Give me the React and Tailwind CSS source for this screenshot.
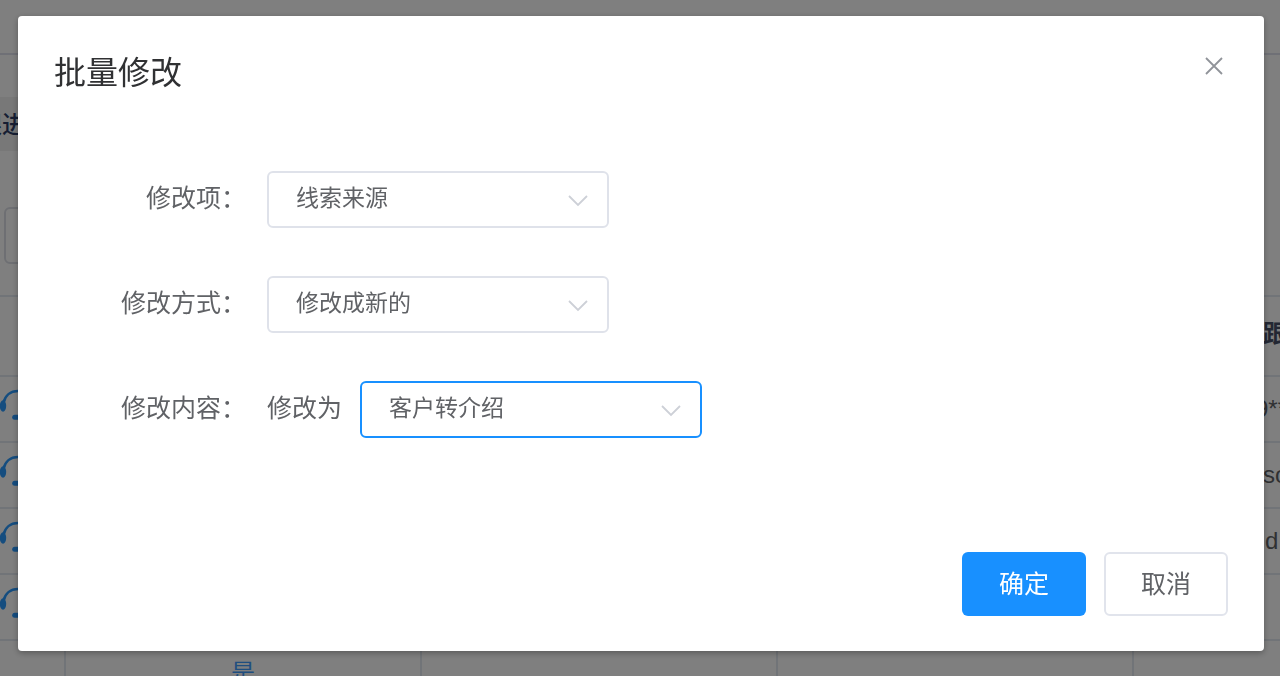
import { useState } from 'react';

const rows = [
  { id: 1, text: '9**', pad: 'pl-[122px]' },
  { id: 2, text: 'so', pad: 'pl-[130px]' },
  { id: 3, text: 'd', pad: 'pl-[132px]' },
  { id: 4, text: '', pad: 'pl-[130px]' },
];

function HeadsetIcon() {
  return (
    <svg width="36" height="46" viewBox="0 0 36 46" fill="none" className="block text-[#2a9aff]">
      <path d="M3.5 17C5 9.500 10.500 5 18 5s13 4.500 14.500 12" stroke="currentColor" strokeWidth="2.600" />
      <ellipse cx="3" cy="20" rx="3.200" ry="5.800" fill="currentColor" />
      <ellipse cx="33" cy="20" rx="3.200" ry="5.800" fill="currentColor" />
      <rect x="12.200" y="28.800" width="11.600" height="5" rx="2.500" fill="currentColor" />
    </svg>
  );
}

function LeadsPage() {
  return (
    <div className="h-screen overflow-hidden bg-white">
      <header className="h-[55px] border-b-2 border-[#dfe1ec]" />
      <div className="mt-[42px] flex h-[54px] w-60 items-center bg-[#f0f0f0] pt-0.5">
        <span className="flex w-[26px] justify-end overflow-hidden whitespace-nowrap text-2xl font-medium text-[#2c3c66]">
          跟进
        </span>
      </div>
      <input
        type="text"
        aria-label="搜索"
        className="mt-14 ml-1 block h-[57px] w-[340px] rounded-md border-2 border-[#dcdfe6]"
      />
      <table className="mt-[31px] w-full table-fixed border-collapse text-left text-2xl text-[#606266]">
        <colgroup>
          <col className="w-[65px]" />
          <col className="w-[356px]" />
          <col className="w-[356px]" />
          <col className="w-[356px]" />
          <col />
        </colgroup>
        <thead>
          <tr className="h-20 border-y-2 border-[#e3e9f0]">
            <th colSpan={4} />
            <th className="overflow-hidden pb-1 pl-[130px] font-bold whitespace-nowrap text-[#474f66]">跟</th>
          </tr>
        </thead>
        <tbody>
          {rows.map((row) => (
            <tr key={row.id} className="h-[66px] border-b-2 border-[#e3e9f0]">
              <td className="overflow-hidden p-0">
                <HeadsetIcon />
              </td>
              <td colSpan={3} />
              <td className={`overflow-hidden whitespace-nowrap ${row.pad}`}>{row.text}</td>
            </tr>
          ))}
          <tr className="h-[66px]">
            <td className="border-r-2 border-[#e3e9f0]" />
            <td className="border-r-2 border-[#e3e9f0] pb-0.5 text-center text-[#3f9cff]">是</td>
            <td className="border-r-2 border-[#e3e9f0]" />
            <td className="border-r-2 border-[#e3e9f0]" />
            <td />
          </tr>
        </tbody>
      </table>
    </div>
  );
}

function FormRow({ label, htmlFor, children }) {
  return (
    <div className="flex items-center">
      <label htmlFor={htmlFor} className="mr-[21px] w-48 shrink-0 pb-1 text-right text-[25px] leading-9">
        {label}
      </label>
      {children}
    </div>
  );
}

function Select({ id, value, onChange, options, active }) {
  return (
    <div className="relative w-[342px]">
      <select
        id={id}
        value={value}
        onChange={(e) => onChange(e.target.value)}
        className={`block h-[57px] w-full appearance-none rounded-md border-2 bg-white pr-14 pb-0.5 pl-[27px] text-[23px] text-[#606266] outline-none ${
          active ? 'border-[#1890ff]' : 'border-[#dfe2ea]'
        }`}
      >
        {options.map((option) => (
          <option key={option} value={option}>
            {option}
          </option>
        ))}
      </select>
      <svg
        width="20"
        height="12"
        viewBox="0 0 20 12"
        fill="none"
        className="pointer-events-none absolute top-6 right-[21px] text-[#cdd0d7]"
      >
        <path d="M1 1l9 9 9-9" stroke="currentColor" strokeWidth="1.800" />
      </svg>
    </div>
  );
}

export default function App() {
  const [field, setField] = useState('线索来源');
  const [mode, setMode] = useState('修改成新的');
  const [content, setContent] = useState('客户转介绍');

  return (
    <div className="font-['Liberation_Sans','Noto_Sans_CJK_SC',sans-serif]">
      <LeadsPage />

      <div className="fixed inset-0 overflow-auto bg-black/50 pt-4 pr-4 pl-[18px]">
        <div
          role="dialog"
          aria-labelledby="dialog-title"
          className="rounded bg-white px-9 pt-8 pb-[35px] text-[#606266] shadow-[0_2px_6px_rgba(0,0,0,0.3)]"
        >
          <div className="flex items-start justify-between">
            <h2 id="dialog-title" className="text-[32px] leading-[50px] text-[#303133]">
              批量修改
            </h2>
            <button type="button" aria-label="关闭" className="flex h-9 w-7 items-center justify-center text-[#909399]">
              <svg width="18" height="18" viewBox="0 0 18 18" fill="none">
                <path d="M1 1l16 16M17 1L1 17" stroke="currentColor" strokeWidth="1.800" />
              </svg>
            </button>
          </div>

          <form className="mt-[73px] flex flex-col gap-12">
            <FormRow label="修改项：" htmlFor="field">
              <Select id="field" value={field} onChange={setField} options={['线索来源']} />
            </FormRow>
            <FormRow label="修改方式：" htmlFor="mode">
              <Select id="mode" value={mode} onChange={setMode} options={['修改成新的']} />
            </FormRow>
            <FormRow label="修改内容：" htmlFor="content">
              <span className="mr-[18px] pb-1 text-[25px] leading-9">修改为</span>
              <Select id="content" value={content} onChange={setContent} options={['客户转介绍']} active />
            </FormRow>
          </form>

          <div className="mt-[114px] flex justify-end gap-[18px] text-[25px]">
            <button type="button" className="h-16 w-31 rounded-md bg-[#1890ff] pt-0.5 text-white">
              确定
            </button>
            <button type="button" className="h-16 w-31 rounded-md border-2 border-[#e1e4ec] bg-white pt-0.5">
              取消
            </button>
          </div>
        </div>
      </div>
    </div>
  );
}
